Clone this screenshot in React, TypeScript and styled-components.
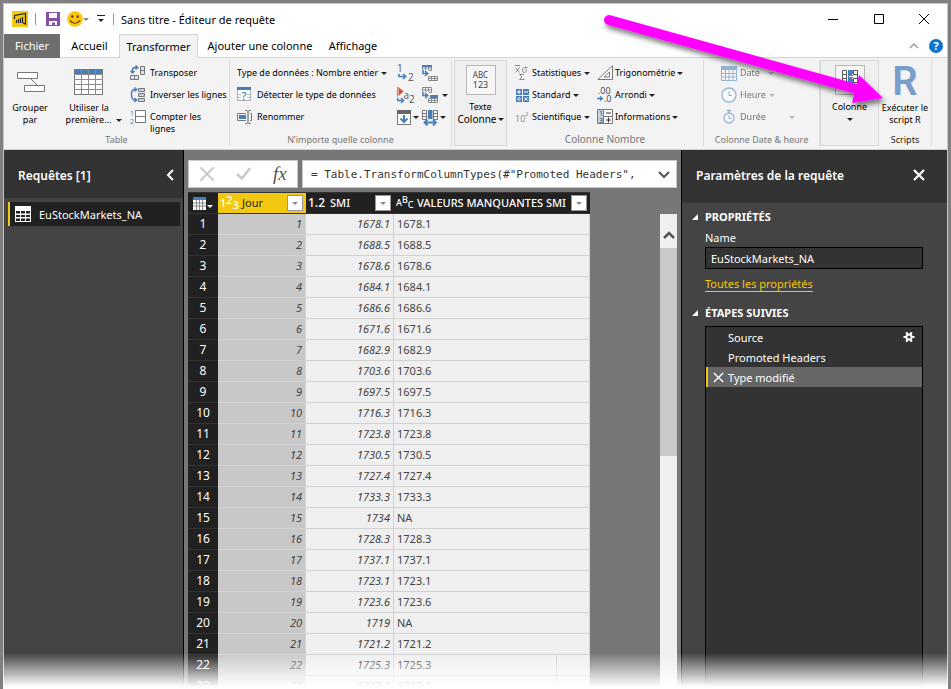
import React from "react";
import styled, { createGlobalStyle, css } from "styled-components";

const Global = createGlobalStyle`
  *, *::before, *::after { box-sizing: border-box; }
  body { margin: 0; background: #fff; font-family: "Noto Sans", "Open Sans", sans-serif; font-size: 11px; color: #000; }
  button, input { font: inherit; color: inherit; padding: 0; margin: 0; border: 0; background: none; border-radius: 0; }
  button { cursor: pointer; }
  svg { display: block; flex: none; overflow: visible; }
`;

const Window = styled.div`
  position: relative;
  height: 100vh;
  overflow: hidden;
  display: flex;
  flex-direction: column;
  border: 3px solid #808080;
  border-bottom: 0;
`;
const Frame = styled.div`
  flex: 1;
  min-height: 0;
  display: flex;
  flex-direction: column;
  border: 1px solid #d8cc78;
  border-bottom: 0;
`;
const TitleBar = styled.header`
  height: 30px;
  flex: none;
  display: flex;
  align-items: center;
  padding-left: 8px;
`;
const Bar = styled.span<{ $ml: number; $mr: number }>`
  width: 1px;
  height: 12px;
  background: #999;
  margin: 0 ${(p) => p.$mr}px 0 ${(p) => p.$ml}px;
`;
const Title = styled.h1`
  margin: 0;
  flex: 1;
  font-size: 11px;
  font-weight: 400;
`;
const IconButton = styled.button<{ $w?: number }>`
  display: flex;
  align-items: center;
  justify-content: center;
  flex: none;
  height: 20px;
  width: ${(p) => (p.$w ? `${p.$w}px` : "auto")};
`;
const TabRow = styled.nav`
  height: 24px;
  flex: none;
  display: flex;
  align-items: flex-end;
  background: linear-gradient(#d4d4d4, #d4d4d4) bottom / 100% 1px no-repeat;
`;
const Tab = styled.button<{ $kind?: "file" | "active"; $w: number }>`
  height: 24px;
  width: ${(p) => p.$w}px;
  flex: none;
  font-size: 11px;
  line-height: 22px;
  white-space: nowrap;
  ${(p) => p.$kind === "file" && css`background: #6e6e6e; color: #fff;`}
  ${(p) =>
    p.$kind === "active" &&
    css`
      background: #f3f3f3;
      border: 1px solid #d4d4d4;
      border-bottom: 0;
    `}
`;
const TabEnd = styled.div`
  flex: 1;
  display: flex;
  justify-content: flex-end;
  align-items: center;
  height: 24px;
  gap: 9px;
  padding-right: 4px;
`;
const Ribbon = styled.div`
  flex: none;
  height: 92px;
  display: flex;
  background: #f3f3f3;
  border-bottom: 1px solid #cfcfcf;
  padding: 2px 0 3px;
`;
const Group = styled.section<{ $w: number; $boxed?: boolean; $line?: boolean; $ml?: number }>`
  width: ${(p) => p.$w}px;
  margin-left: ${(p) => p.$ml ?? 0}px;
  flex: none;
  display: flex;
  flex-direction: column;
  ${(p) => p.$line && css`border-right: 1px solid #dcdcdc;`}
  ${(p) => p.$boxed && css`border: 1px solid #d8d8d8; background: #efefef;`}
`;
const GroupBody = styled.div<{ $pl?: number }>`
  flex: 1;
  min-height: 0;
  display: flex;
  align-items: flex-start;
  padding-top: 2px;
  padding-left: ${(p) => p.$pl ?? 0}px;
`;
const GroupLabel = styled.div<{ $size?: number; $dark?: boolean }>`
  height: 13px;
  flex: none;
  text-align: center;
  white-space: nowrap;
  font-size: ${(p) => p.$size ?? 9}px;
  line-height: 13px;
  color: ${(p) => (p.$dark ? "#222" : "#777")};
`;
const Stack = styled.div<{ $w: number; $dim?: boolean; $ml?: number }>`
  width: ${(p) => p.$w}px;
  margin-left: ${(p) => p.$ml ?? 0}px;
  flex: none;
  display: grid;
  grid-auto-rows: 22px;
  opacity: ${(p) => (p.$dim ? 0.55 : 1)};
`;
const Command = styled.button<{ $gap?: number; $low?: boolean }>`
  display: flex;
  align-items: flex-start;
  gap: ${(p) => p.$gap ?? 4}px;
  font-size: 9px;
  line-height: 12px;
  padding-top: 5px;
  text-align: left;
  white-space: nowrap;
  > svg:first-child { margin-top: ${(p) => (p.$low ? -1 : -2)}px; }
`;
const Drop = styled.span<{ $light?: boolean; $ml?: number }>`
  display: inline-block;
  flex: none;
  margin-left: ${(p) => p.$ml ?? 0}px;
  border: 3px solid transparent;
  border-top-color: ${(p) => (p.$light ? "#888" : "#222")};
  border-bottom: 0;
`;
const CommandDrop = styled(Drop)`
  margin-top: 5px;
`;
const BigButton = styled.button<{ $w: number }>`
  width: ${(p) => p.$w}px;
  flex: none;
  display: flex;
  flex-direction: column;
  align-items: center;
  font-size: 9px;
  line-height: 12px;
  white-space: nowrap;
`;
const BigIcon = styled.span<{ $h: number; $top?: boolean }>`
  height: ${(p) => p.$h}px;
  display: flex;
  align-items: ${(p) => (p.$top ? "flex-start" : "center")};
  padding-top: ${(p) => (p.$top ? 2 : 0)}px;
  justify-content: center;
`;
const WithDrop = styled.span<{ $size?: number; $ml?: number }>`
  display: flex;
  align-items: center;
  min-height: 12px;
  gap: 1px;
  margin-left: ${(p) => p.$ml ?? 0}px;
  font-size: ${(p) => p.$size ?? 9}px;
`;
const Tile = styled.span`
  width: 30px;
  height: 30px;
  border: 1px solid #b8b8b8;
  background: #f6f6f6;
  display: flex;
  flex-direction: column;
  align-items: center;
  justify-content: center;
`;
const TileText = styled.span<{ $size: number }>`
  font-size: ${(p) => p.$size}px;
  line-height: 10px;
  color: #444;
`;
const RLogo = styled.span`
  font-family: Roboto, sans-serif;
  font-size: 40px;
  font-weight: 600;
  line-height: 36px;
  color: #7b9dca;
`;

const Body = styled.main`
  flex: 1;
  min-height: 0;
  display: flex;
`;
const SidePanel = styled.aside<{ $w: number; $edge: "left" | "right" }>`
  width: ${(p) => p.$w}px;
  flex: none;
  background: #444;
  color: #fff;
  border-${(p) => p.$edge}: 1px solid #000;
`;
const PanelHeader = styled.div<{ $extra?: number }>`
  height: ${(p) => 48 + (p.$extra ?? 0)}px;
  background: #333;
  display: flex;
  justify-content: space-between;
  align-items: center;
  padding: 2px 6px ${(p) => p.$extra ?? 0}px 14px;
`;
const PanelTitle = styled.h2`
  margin: 0;
  font-size: 12px;
  font-weight: 600;
`;
const QueryItem = styled.button`
  width: 172px;
  height: 24px;
  margin: 4px 0 0 4px;
  display: flex;
  align-items: center;
  gap: 8px;
  padding-left: 5px;
  background: #212121;
  border-left: 2px solid #f2c811;
`;
const Center = styled.section`
  flex: 1;
  min-width: 0;
  overflow: hidden;
  background: #777;
  padding: 10px 4px 0;
`;
const FormulaBar = styled.div`
  display: flex;
  gap: 4px;
  height: 28px;
`;
const FormulaTools = styled.div`
  width: 110px;
  flex: none;
  display: flex;
  align-items: center;
  justify-content: space-around;
  background: #fff;
  border: 1px solid #c8c8c8;
`;
const Fx = styled.span`
  font-family: "Liberation Serif", serif;
  font-style: italic;
  font-size: 19px;
  line-height: 20px;
  color: #555;
`;
const FormulaField = styled.div`
  flex: 1;
  min-width: 0;
  display: flex;
  align-items: center;
  background: #fff;
  border: 1px solid #c8c8c8;
  padding: 0 6px 0 8px;
`;
const FormulaInput = styled.input`
  flex: 1;
  min-width: 0;
  font-family: "DejaVu Sans Mono", monospace;
  font-size: 11px;
  color: #333;
  outline: 0;
`;
const GridArea = styled.div`
  display: flex;
  justify-content: space-between;
  align-items: flex-start;
  margin-top: 4px;
`;
const DataTable = styled.table`
  width: 402px;
  table-layout: fixed;
  border-collapse: separate;
  border-spacing: 0;
`;
const Head = styled.th<{ $w: number; $selected?: boolean }>`
  width: ${(p) => p.$w}px;
  height: 22px;
  padding: 0;
  color: ${(p) => (p.$selected ? "#222" : "#fff")};
  background: ${(p) => (p.$selected ? "#f2c811" : "#212121")};
  border-top: 1px solid #333;
  border-bottom: 1px solid #333;
`;
const HeadInner = styled.div`
  display: flex;
  align-items: center;
  height: 20px;
  padding: 0 3px 0 2px;
  font-size: 11px;
  line-height: 18px;
  white-space: nowrap;
`;
const HeadName = styled.span<{ $light?: boolean }>`
  flex: 1;
  text-align: left;
  font-weight: ${(p) => (p.$light ? 400 : 500)};
`;
const TypeMark = styled.span<{ $w: number; $size?: number }>`
  width: ${(p) => p.$w}px;
  height: 20px;
  flex: none;
  display: flex;
  align-items: flex-start;
  color: #fff;
  font-size: ${(p) => p.$size ?? 11}px;
  font-weight: 500;
  line-height: 20px;
`;
const Lift = styled.span<{ $by: "up" | "down" }>`
  line-height: ${(p) => (p.$by === "up" ? 14 : 24)}px;
`;
const Filter = styled.button`
  width: 16px;
  height: 16px;
  flex: none;
  background: #fff;
  border: 1px solid #999;
  display: flex;
  align-items: center;
  justify-content: center;
`;
const RowHead = styled.th`
  height: 21px;
  padding: 0;
  background: #212121;
  color: #fff;
  font-size: 12px;
  line-height: 20px;
  font-weight: 400;
  border-bottom: 1px solid #333;
`;
const Cell = styled.td<{ $kind: "index" | "num" | "text" }>`
  height: 21px;
  padding: 0 3px;
  font-size: 11px;
  line-height: 20px;
  color: #444;
  background: ${(p) => (p.$kind === "index" ? "#c8c8c8" : "#efefef")};
  border-bottom: 1px solid #d2d2d2;
  border-right: 1px solid #d2d2d2;
  text-align: ${(p) => (p.$kind === "text" ? "left" : "right")};
  font-style: ${(p) => (p.$kind === "text" ? "normal" : "italic")};
`;
const Split = styled.div`
  display: flex;
  justify-content: space-between;
`;
const Stub = styled.span`
  width: 30px;
  border-left: 1px solid #ccc;
`;
const ScrollTrack = styled.div`
  width: 17px;
  height: 560px;
  margin-top: 22px;
  background: #efefef;
`;
const ScrollUp = styled.button`
  width: 17px;
  height: 34px;
  display: flex;
  justify-content: center;
  align-items: center;
  padding-top: 8px;
`;
const Thumb = styled.div`
  height: 208px;
  background: #c9c9c9;
`;
const Settings = styled.div`
  padding: 6px 24px 0 10px;
`;
const SectionTitle = styled.h3`
  margin: 0;
  display: flex;
  align-items: center;
  gap: 7px;
  font-size: 11px;
  font-weight: 700;
  line-height: 16px;
`;
const Indent = styled.div`
  padding-left: 13px;
`;
const FieldLabel = styled.label`
  display: block;
  line-height: 16px;
  margin: 5px 0 1px;
`;
const NameInput = styled.input`
  display: block;
  width: 100%;
  height: 22px;
  background: #333;
  border: 1px solid #000;
  padding: 0 5px;
`;
const PropsLink = styled.a`
  display: inline-block;
  margin: 8px 0 13px;
  color: #f2c811;
  line-height: 14px;
  text-decoration: none;
  border-bottom: 1px solid #f2c811;
`;
const Steps = styled.ol`
  list-style: none;
  margin: 5px 0 0;
  padding: 0;
  height: 380px;
  background: #333;
  border: 1px solid #000;
`;
const Step = styled.li<{ $selected?: boolean }>`
  height: 20px;
  display: flex;
  align-items: center;
  padding-right: 7px;
  border-left: 2px solid ${(p) => (p.$selected ? "#f2c811" : "transparent")};
  background: ${(p) => (p.$selected ? "#666" : "transparent")};
`;
const StepMark = styled.span`
  width: 20px;
  padding-left: 5px;
`;
const StepName = styled.button`
  flex: 1;
  text-align: left;
`;
const Fade = styled.div`
  position: absolute;
  left: -3px;
  right: -3px;
  bottom: 0;
  height: 36px;
  background: linear-gradient(rgba(255, 255, 255, 0), #fff 94%);
  pointer-events: none;
`;
const Pointer = styled.svg`
  position: absolute;
  left: 597px;
  top: 7px;
  pointer-events: none;
`;
const Glyph = styled.text`
  font-family: "Open Sans", sans-serif;
`;

const G = "#777";
const B = "#4a7ebb";

const PowerBi = () => (
  <svg width="16" height="16">
    <rect width="16" height="16" fill="#f2c811" />
    <path d="M2.500 8V4.500L13.500 2.500V13L11 12M4.500 12V9M6.500 12V8M8.500 12V7M10.500 12V6" fill="none" stroke="#222" strokeWidth="1.200" />
  </svg>
);
const Save = () => (
  <svg width="14" height="14">
    <path d="M0 0H14V14H0Z" fill="#8450a8" />
    <path d="M3 1H11V6H3ZM3 9H11V13H9V10.500H6V13H3Z" fill="#fff" />
  </svg>
);
const Smiley = () => (
  <svg width="16" height="16">
    <circle cx="8" cy="8" r="7.800" fill="#fcc40d" />
    <ellipse cx="5.300" cy="5.500" rx="1.100" ry="1.600" fill="#5b4300" />
    <ellipse cx="10.700" cy="5.500" rx="1.100" ry="1.600" fill="#5b4300" />
    <path d="M3 9.500Q8 15 13 9.500" fill="none" stroke="#5b4300" strokeWidth="1.200" />
  </svg>
);
const GroupBy = () => (
  <svg width="27" height="21">
    <path d="M14 7L21 14" stroke={G} />
    <path d="M.5 .5H20.500V6.500H.5ZM7.500 13.500H27.500V19.500H7.500Z" fill="#fff" stroke={G} />
  </svg>
);
const BigTable = () => (
  <svg width="30" height="27">
    <rect x=".5" y=".5" width="28" height="25" fill="#fff" stroke={G} />
    <rect x="1" y="1" width="27" height="4" fill={B} />
    <path d="M0 5.500H29M0 10.500H29M0 15.500H29M0 20.500H29M7.500 1V26M14.500 1V26M21.500 1V26" stroke="#8c8c8c" />
  </svg>
);
const Transpose = () => (
  <svg width="16" height="16">
    <path d="M10.500 1.500H14.500V9.500H10.500ZM10.500 5.500H14.500M.5 10.500H8.500V14.500H.5ZM4.500 10.500V14.500" fill="#dce3ee" stroke={G} />
    <path d="M2.500 8V5Q2.500 2.500 5 2.500H7M5.500 .5L7.700 2.500L5.500 4.500M.5 6L2.500 8L4.500 6" fill="none" stroke={B} strokeWidth="1.500" />
  </svg>
);
const Reverse = () => (
  <svg width="16" height="16">
    <path d="M8.500 1.500H14.500V4.500H8.500ZM8.500 6.500H14.500V9.500H8.500ZM8.500 11.500H14.500V14.500H8.500Z" fill="#c5cfe0" stroke={G} />
    <path d="M6 2.500H4Q1.500 3 1.500 7.500T4 13H6M4.500 .5L6.700 2.500L4.500 4.500M4.500 11L6.700 13L4.500 15" fill="none" stroke={B} strokeWidth="1.500" />
  </svg>
);
const CountRows = () => (
  <svg width="16" height="15">
    <path d="M5.500 .5H15.500V12.500H5.500ZM5.500 6.500H15.500" fill="#fff" stroke={G} />
    <Glyph x="0" y="6" fontSize="7" fill={B}>1</Glyph>
    <Glyph x="0" y="14" fontSize="7" fill={B}>2</Glyph>
  </svg>
);
const Detect = () => (
  <svg width="15" height="15">
    <rect x=".5" y=".5" width="13" height="13" fill="#fff" stroke="#aaa" />
    <rect width="14" height="3" fill={B} />
    <path d="M0 7.500H14M0 10.500H14M4.500 4V14M9.500 4V14" stroke="#bbb" />
    <rect x="4" y="4" width="6" height="9" fill="#fff" />
    <Glyph x="4.500" y="13" fontSize="11" fontWeight="600" fill={B}>?</Glyph>
  </svg>
);
const Rename = () => (
  <svg width="15" height="14">
    <path d="M9 3.500H.5V10.500H9M13 3.500H14.500V10.500H13" fill="none" stroke={G} />
    <rect x="2" y="5" width="7" height="4" fill={B} />
    <path d="M8.500 .5H10L11 1.500L12 .5H13.500M11 1.500V12.500M8.500 13.500H10L11 12.500L12 13.500H13.500" fill="none" stroke="#555" />
  </svg>
);
const Replace = () => (
  <svg width="18" height="17">
    <Glyph x="0" y="7" fontSize="10" fill="#555">1</Glyph>
    <Glyph x="11" y="16" fontSize="10" fill="#555">2</Glyph>
    <path d="M2 9V11.500H8.500M6 9L8.700 11.500L6 14" fill="none" stroke={B} strokeWidth="1.600" />
  </svg>
);
const ReplaceError = () => (
  <svg width="18" height="17">
    <path d="M.5 0V10" stroke="#999" />
    <path d="M1.500 0L6.500 4.500L1.500 9Z" fill="#d9532c" />
    <Glyph x="6.500" y="12" fontSize="10" fill="#555">a</Glyph>
    <Glyph x="12" y="16" fontSize="10" fill="#555">2</Glyph>
    <path d="M.8 11V13.500H6M4 11L6.500 13.500L4 16" fill="none" stroke={B} strokeWidth="1.500" />
  </svg>
);
const Fill = () => (
  <svg width="14" height="16">
    <rect x=".5" y=".5" width="13" height="14" fill="#fff" stroke={G} />
    <rect width="14" height="4" fill="#666" />
    <path d="M7 5V12M3.500 8.500L7 12L10.500 8.500" fill="none" stroke={B} strokeWidth="2" />
  </svg>
);
const Pivot = ({ alt }: { alt?: boolean }) => (
  <svg width="17" height="17">
    <path d="M.5 .5H9.500V5.500H.5ZM.5 3H9.500M3.500 .5V5.500M6.500 .5V5.500" fill="#fff" stroke="#888" />
    <path d="M6.500 11.500H15.500V15.500H6.500ZM6.500 13.500H15.500M9.500 11.500V15.500M12.500 11.500V15.500" fill="#fff" stroke="#888" />
    {alt ? <path d="M8 8H16V11H8Z" fill={B} /> : <path d="M0 0H10V2H0Z" fill={B} />}
    <path d="M0 5H7V11H0Z" fill="#f3f3f3" />
    <path d="M1 5V8.500H5M3 6L5.800 8.500L3 11" fill="none" stroke={B} strokeWidth="1.600" />
  </svg>
);
const Move = () => (
  <svg width="17" height="16">
    <path d="M.5 .5H4.500V9.500H.5ZM.5 3.500H4.500M.5 6.500H4.500M11.500 .5H15.500V9.500H11.500ZM11.500 3.500H15.500M11.500 6.500H15.500" fill="#fff" stroke={G} />
    <path d="M6 0H10.500V9H6Z" fill={B} />
    <path d="M3 12.500H13.500M5.500 9.500L2.500 12.500L5.500 15.500M11 9.500L14 12.500L11 15.500" fill="none" stroke={B} strokeWidth="1.800" />
  </svg>
);
const Stats = () => (
  <svg width="14" height="16">
    <path d="M0 .5H5M.5 2.500L4.500 7.500M4.500 2.500L.5 7.500M12.500 2.500H9.500Q7 3 7.500 5.500T10 7.500T11 3.500M9 9.500H4.500L7 12L4.500 14.500H9.500" fill="none" stroke="#8a8a8a" />
  </svg>
);
const Standard = () => (
  <svg width="14" height="14">
    <path d="M1 1H7V7H1ZM8 1H14V7H8ZM1 8H7V14H1ZM8 8H14V14H8Z" fill={B} />
    <path d="M2 4H6M4 2V6M9 4H13M2 11H6M4 9V10M4 12V13M9.500 9.500L12.500 12.500M12.500 9.500L9.500 12.500" stroke="#fff" />
  </svg>
);
const Sci = () => (
  <svg width="14" height="14">
    <Glyph x="0" y="13" fontSize="9" fill="#888">10</Glyph>
    <Glyph x="10" y="7" fontSize="6" fill="#888">2</Glyph>
  </svg>
);
const Trig = () => (
  <svg width="16" height="16">
    <path d="M.8 14.500H15.500V.8ZM7 12H12.500V7Z" fill="#fff" stroke={G} />
  </svg>
);
const Round = () => (
  <svg width="16" height="16">
    <Glyph x="1" y="7" fontSize="9" fill="#444">.00</Glyph>
    <Glyph x="7" y="15" fontSize="9" fill="#444">.0</Glyph>
    <path d="M0 11.500H5M3 9.500L5.300 11.500L3 13.500" fill="none" stroke={B} strokeWidth="1.400" />
  </svg>
);
const Info = () => (
  <svg width="16" height="15">
    <path d="M.5 .5H15.500V14.500H.5ZM6.500 .5V14.500M.5 7.500H15.500" fill="#fff" stroke={G} />
    <path d="M1 1H6V14H1Z" fill="#c8d5e8" />
    <Glyph x="2" y="7" fontSize="7" fill="#333">1</Glyph>
    <Glyph x="2" y="14" fontSize="7" fill="#333">3</Glyph>
    <path d="M9 4H14M9 11H14M11.500 8.500V13.500" stroke="#333" />
  </svg>
);
const DateIcon = () => (
  <svg width="16" height="15">
    <rect x=".5" y=".5" width="15" height="14" fill="#fff" stroke={B} />
    <path d="M0 0H16V4H0Z" fill={B} />
    <path d="M0 7.500H16M0 11H16M4.500 4V15M8 4V15M12 4V15" stroke={B} />
  </svg>
);
const Clock = ({ timer }: { timer?: boolean }) => (
  <svg width="16" height="16">
    {timer && <path d="M6 1.500H10M8 1V4" stroke={B} strokeWidth="1.500" />}
    <circle cx="8" cy={timer ? 9 : 8} r={timer ? 5 : 7} fill="#fff" stroke={B} strokeWidth="1.300" />
    <path d={timer ? "M8 6V9.500H10.500" : "M8 4V8.500H11"} fill="none" stroke={B} />
  </svg>
);
const Structured = () => (
  <svg width="18" height="22">
    <path d="M1.500 1.500H5.500V13.500H1.500ZM1.500 5.500H5.500M1.500 9.500H5.500M12.500 1.500H16.500V13.500H12.500ZM12.500 5.500H16.500M12.500 9.500H16.500" fill="#fff" stroke="#555" />
    <path d="M7 1H12V14H7Z" fill={B} />
    <path d="M8 7.500H13M11 5L14 7.500L11 10" stroke="#fff" fill="none" />
  </svg>
);
const TableIcon = ({ small }: { small?: boolean }) =>
  small ? (
    <svg width="13" height="13">
      <rect width="13" height="13" fill="#fff" />
      <rect width="13" height="3" fill={B} />
      <path d="M0 6H13M0 9H13M3.500 3V13M6.500 3V13M9.500 3V13" stroke="#888" />
    </svg>
  ) : (
    <svg width="16" height="16">
      <rect width="16" height="16" fill="#fff" />
      <path d="M1 5H5V7.500H1ZM6 5H10V7.500H6ZM11 5H15V7.500H11ZM1 9H5V11H1ZM6 9H10V11H6ZM11 9H15V11H11ZM1 12.500H5V15H1ZM6 12.500H10V15H6ZM11 12.500H15V15H11Z" fill="#212121" />
    </svg>
  );
const Cross = ({ s, w, c }: { s: number; w: number; c: string }) => (
  <svg width={s} height={s} viewBox="0 0 12 12">
    <path d="M1 1L11 11M11 1L1 11" stroke={c} strokeWidth={w} />
  </svg>
);
const Chevron = ({ d, c, w = 2 }: { d: string; c: string; w?: number }) => (
  <svg width="12" height="12">
    <path d={d} fill="none" stroke={c} strokeWidth={w} />
  </svg>
);
const Corner = () => (
  <svg width="6" height="6">
    <path d="M6 0V6H0Z" fill="#fff" />
  </svg>
);
const Gear = () => (
  <svg width="12" height="12" viewBox="-6 -6 12 12">
    <path d="M-5.500 0H5.500M-2.700-4.800L2.700 4.800M2.700-4.800L-2.700 4.800" stroke="#fff" strokeWidth="2.200" />
    <circle r="2.600" fill="#333" stroke="#fff" strokeWidth="2" />
  </svg>
);

const values: string[] = [
  "1678.1", "1688.5", "1678.6", "1684.1", "1686.6", "1671.6", "1682.9", "1703.6",
  "1697.5", "1716.3", "1723.8", "1730.5", "1727.4", "1733.3", "1734", "1728.3",
  "1737.1", "1723.1", "1723.6", "1719", "1721.2", "1725.3", "1727.2",
];
const missing = new Set(["1734", "1719"]);

type CmdProps = {
  icon?: React.ReactNode;
  children: React.ReactNode;
  gap?: number;
  drop?: number;
  light?: boolean;
  low?: boolean;
};
const Cmd = ({ icon, children, gap, drop, light, low }: CmdProps) => (
  <Command $gap={gap} $low={low}>
    {icon}
    <span>{children}</span>
    {drop !== undefined && <CommandDrop $ml={drop} $light={light} />}
  </Command>
);

const RibbonBar = () => (
  <Ribbon>
    <Group $w={226} $line>
      <GroupBody>
        <BigButton $w={52}>
          <BigIcon $h={40}><GroupBy /></BigIcon>
          <span>Grouper</span>
          <span>par</span>
        </BigButton>
        <BigButton $w={66}>
          <BigIcon $h={40}><BigTable /></BigIcon>
          <span>Utiliser la</span>
          <WithDrop $ml={10}>première... <Drop $ml={4} /></WithDrop>
        </BigButton>
        <Stack $w={98} $ml={8}>
          <Cmd icon={<Transpose />}>Transposer</Cmd>
          <Cmd icon={<Reverse />}>Inverser les lignes</Cmd>
          <Cmd icon={<CountRows />} low>Compter les<br />lignes</Cmd>
        </Stack>
      </GroupBody>
      <GroupLabel>Table</GroupLabel>
    </Group>
    <Group $w={222} $line>
      <GroupBody $pl={7}>
        <Stack $w={160}>
          <Cmd drop={0} gap={3}>Type de données : Nombre entier</Cmd>
          <Cmd icon={<Detect />} gap={5}>Détecter le type de données</Cmd>
          <Cmd icon={<Rename />} gap={5} low>Renommer</Cmd>
        </Stack>
        <Stack $w={25}>
          <Command aria-label="Remplacer les valeurs"><Replace /></Command>
          <Command aria-label="Remplacer les erreurs"><ReplaceError /></Command>
          <Command aria-label="Remplir" $gap={2} $low><Fill /><CommandDrop /></Command>
        </Stack>
        <Stack $w={28}>
          <Command aria-label="Pivoter la colonne"><Pivot /></Command>
          <Command aria-label="Dépivoter" $gap={3}><Pivot alt /><CommandDrop /></Command>
          <Command aria-label="Déplacer" $gap={1} $low><Move /><CommandDrop /></Command>
        </Stack>
      </GroupBody>
      <GroupLabel>N’importe quelle colonne</GroupLabel>
    </Group>
    <Group $w={53} $ml={2} $boxed>
      <GroupBody>
        <BigButton $w={51}>
          <BigIcon $h={38} $top>
            <Tile>
              <TileText $size={8}>ABC</TileText>
              <TileText $size={9}>123</TileText>
            </Tile>
          </BigIcon>
          <span>Texte</span>
          <WithDrop $size={10}>Colonne<Drop /></WithDrop>
        </BigButton>
      </GroupBody>
    </Group>
    <Group $w={197} $line>
      <GroupBody $pl={8}>
        <Stack $w={82}>
          <Cmd icon={<Stats />} gap={3} drop={0}>Statistiques</Cmd>
          <Cmd icon={<Standard />} drop={0} gap={3} low>Standard</Cmd>
          <Cmd icon={<Sci />} drop={0} gap={3}>Scientifique</Cmd>
        </Stack>
        <Stack $w={98}>
          <Cmd icon={<Trig />} gap={2} drop={0}>Trigonométrie</Cmd>
          <Cmd icon={<Round />} gap={2} drop={0}>Arrondi</Cmd>
          <Cmd icon={<Info />} gap={2} drop={0}>Informations</Cmd>
        </Stack>
      </GroupBody>
      <GroupLabel $size={10}>Colonne Nombre</GroupLabel>
    </Group>
    <Group $w={116} $line>
      <GroupBody $pl={17}>
        <Stack $w={90} $dim>
          <Cmd icon={<DateIcon />} gap={3} drop={5} light low>Date</Cmd>
          <Cmd icon={<Clock />} gap={3} drop={0} light>Heure</Cmd>
          <Cmd icon={<Clock timer />} gap={3} drop={20} light>Durée</Cmd>
        </Stack>
      </GroupBody>
      <GroupLabel>Colonne Date &amp; heure</GroupLabel>
    </Group>
    <Group $w={59} $boxed>
      <GroupBody>
        <BigButton $w={57}>
          <BigIcon $h={38} $top><Tile><Structured /></Tile></BigIcon>
          <span>Colonne</span>
          <WithDrop><Drop /></WithDrop>
        </BigButton>
      </GroupBody>
    </Group>
    <Group $w={53} $line>
      <GroupBody>
        <BigButton $w={52}>
          <BigIcon $h={40}><RLogo>R</RLogo></BigIcon>
          <span>Exécuter le</span>
          <span>script R</span>
        </BigButton>
      </GroupBody>
      <GroupLabel $dark>Scripts</GroupLabel>
    </Group>
  </Ribbon>
);

export default function App() {
  return (
    <Window>
      <Global />
      <Frame>
        <TitleBar>
          <PowerBi />
          <Bar $ml={7} $mr={10} />
          <IconButton aria-label="Enregistrer"><Save /></IconButton>
          <IconButton $w={36} aria-label="Commentaires"><Smiley /><Drop $light /></IconButton>
          <IconButton $w={10} aria-label="Personnaliser">
            <svg width="8" height="8"><path d="M0 .5H8" stroke="#222" /><path d="M1 4H7L4 7Z" fill="#222" /></svg>
          </IconButton>
          <Bar $ml={7} $mr={7} />
          <Title>Sans titre - Éditeur de requête</Title>
          <IconButton $w={46} aria-label="Réduire"><svg width="10" height="10"><path d="M0 5.500H10" stroke="#000" /></svg></IconButton>
          <IconButton $w={45} aria-label="Agrandir"><svg width="10" height="10"><path d="M.5 .5H9.500V9.500H.5Z" fill="none" stroke="#000" /></svg></IconButton>
          <IconButton $w={46} aria-label="Fermer"><Cross s={12} w={1} c="#000" /></IconButton>
        </TitleBar>
        <TabRow>
          <Tab $w={56} $kind="file">Fichier</Tab>
          <Tab $w={59}>Accueil</Tab>
          <Tab $w={79} $kind="active">Transformer</Tab>
          <Tab $w={124}>Ajouter une colonne</Tab>
          <Tab $w={62}>Affichage</Tab>
          <TabEnd>
            <IconButton aria-label="Réduire le ruban"><Chevron d="M2 8L6 4L10 8" c="#999" w={1.3} /></IconButton>
            <IconButton aria-label="Aide">
              <svg width="14" height="14">
                <circle cx="7" cy="7" r="7" fill="#0a74d1" />
                <Glyph x="4.500" y="11" fontSize="11" fontWeight="700" fill="#fff">?</Glyph>
              </svg>
            </IconButton>
          </TabEnd>
        </TabRow>
        <RibbonBar />
        <Body>
          <SidePanel $w={180} $edge="right">
            <PanelHeader>
              <PanelTitle>Requêtes [1]</PanelTitle>
              <IconButton aria-label="Réduire le volet"><Chevron d="M8 1L3 6L8 11" c="#fff" /></IconButton>
            </PanelHeader>
            <QueryItem><TableIcon />EuStockMarkets_NA</QueryItem>
          </SidePanel>
          <Center>
            <FormulaBar>
              <FormulaTools>
                <IconButton aria-label="Annuler"><Cross s={16} w={1.5} c="#c8c8c8" /></IconButton>
                <IconButton aria-label="Valider">
                  <svg width="16" height="14"><path d="M1 7L6 11.500L14 1" fill="none" stroke="#c8c8c8" strokeWidth="2.500" /></svg>
                </IconButton>
                <Fx>fx</Fx>
              </FormulaTools>
              <FormulaField>
                <FormulaInput aria-label="Formule" defaultValue={'= Table.TransformColumnTypes(#"Promoted Headers",'} />
                <IconButton aria-label="Développer"><Chevron d="M1 4L6 9L11 4" c="#555" /></IconButton>
              </FormulaField>
            </FormulaBar>
            <GridArea>
              <DataTable>
                <thead>
                  <tr>
                    <Head $w={30}>
                      <HeadInner>
                        <WithDrop $ml={3}>
                          <TableIcon small />
                          <svg width="6" height="12"><path d="M0 8H6L3 11Z" fill="#fff" /></svg>
                        </WithDrop>
                      </HeadInner>
                    </Head>
                    <Head $w={88} $selected>
                      <HeadInner>
                        <TypeMark $w={22}>1<Lift $by="up">2</Lift><Lift $by="down">3</Lift></TypeMark>
                        <HeadName $light>Jour</HeadName>
                        <Filter aria-label="Filtrer Jour"><Drop $light /></Filter>
                      </HeadInner>
                    </Head>
                    <Head $w={88}>
                      <HeadInner>
                        <TypeMark $w={22} $size={12}>1.2</TypeMark>
                        <HeadName>SMI</HeadName>
                        <Filter aria-label="Filtrer SMI"><Drop $light /></Filter>
                      </HeadInner>
                    </Head>
                    <Head $w={196}>
                      <HeadInner>
                        <TypeMark $w={21} $size={9}>A<Lift $by="up">B</Lift><Lift $by="down">C</Lift></TypeMark>
                        <HeadName>VALEURS MANQUANTES SMI</HeadName>
                        <Filter aria-label="Filtrer Valeurs"><Drop $light /></Filter>
                      </HeadInner>
                    </Head>
                  </tr>
                </thead>
                <tbody>
                  {values.map((v, i) => (
                    <tr key={i}>
                      <RowHead scope="row">{i + 1}</RowHead>
                      <Cell $kind="index">{i + 1}</Cell>
                      <Cell $kind="num">{v}</Cell>
                      <Cell $kind="text">
                        {i < 21 ? (missing.has(v) ? "NA" : v) : <Split>{v}<Stub /></Split>}
                      </Cell>
                    </tr>
                  ))}
                </tbody>
              </DataTable>
              <ScrollTrack>
                <ScrollUp aria-label="Défiler vers le haut"><Chevron d="M1 9L6 4L11 9" c="#555" w={2.5} /></ScrollUp>
                <Thumb />
              </ScrollTrack>
            </GridArea>
          </Center>
          <SidePanel $w={266} $edge="left">
            <PanelHeader $extra={5}>
              <PanelTitle>Paramètres de la requête</PanelTitle>
              <IconButton $w={44} aria-label="Fermer le volet"><Cross s={12} w={2.2} c="#fff" /></IconButton>
            </PanelHeader>
            <Settings>
              <SectionTitle><Corner />PROPRIÉTÉS</SectionTitle>
              <Indent>
                <FieldLabel htmlFor="query-name">Name</FieldLabel>
                <NameInput id="query-name" defaultValue="EuStockMarkets_NA" />
                <PropsLink href="#proprietes">Toutes les propriétés</PropsLink>
              </Indent>
              <SectionTitle><Corner />ÉTAPES SUIVIES</SectionTitle>
              <Indent>
                <Steps>
                  <Step><StepMark /><StepName>Source</StepName><IconButton aria-label="Paramètres de l’étape"><Gear /></IconButton></Step>
                  <Step><StepMark /><StepName>Promoted Headers</StepName></Step>
                  <Step $selected><StepMark><Cross s={11} w={1.5} c="#fff" /></StepMark><StepName>Type modifié</StepName></Step>
                </Steps>
              </Indent>
            </Settings>
          </SidePanel>
        </Body>
      </Frame>
      <Fade />
      <Pointer width="300" height="110" viewBox="600 10 300 110">
        <defs>
          <filter id="soft" x="-10%" y="-20%" width="120%" height="150%">
            <feDropShadow dx="2" dy="4" stdDeviation="2.500" floodColor="#000" floodOpacity="0.500" />
          </filter>
        </defs>
        <g filter="url(#soft)">
          <path d="M609 20L860 90" stroke="#f0f" strokeWidth="10" strokeLinecap="round" />
          <path d="M883 98L859 75L852 103Z" fill="#f0f" />
        </g>
      </Pointer>
    </Window>
  );
}
